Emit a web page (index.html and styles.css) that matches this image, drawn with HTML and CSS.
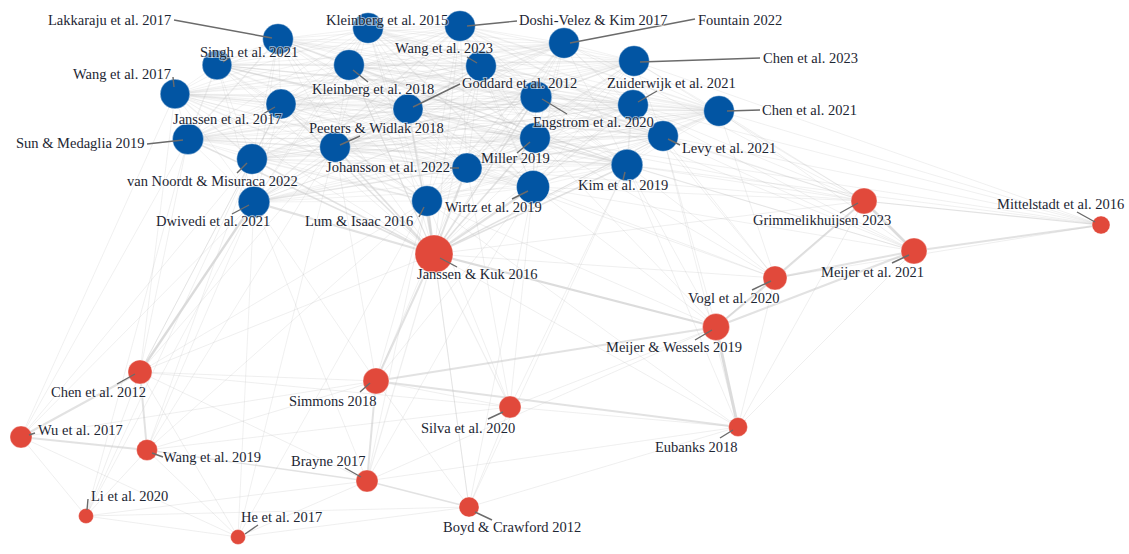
FILE: index.html
```html
<!DOCTYPE html>
<html lang="en">
<head>
<meta charset="utf-8">
<title>Citation network</title>
<link rel="stylesheet" href="styles.css">
</head>
<body>
<div class="canvas">
<svg class="graph" width="1129" height="554" viewBox="0 0 1129 554" xmlns="http://www.w3.org/2000/svg">
  <g id="edges"></g>
  <g class="nodes">
    <circle id="lak" class="node blue" cx="278" cy="39" r="15.3"/>
    <circle id="kl15" class="node blue" cx="368" cy="28" r="15.3"/>
    <circle id="doshi" class="node blue" cx="460" cy="26" r="15.3"/>
    <circle id="fount" class="node blue" cx="564" cy="43" r="15.3"/>
    <circle id="chen23" class="node blue" cx="634" cy="61" r="15.3"/>
    <circle id="singh" class="node blue" cx="217" cy="65" r="14.8"/>
    <circle id="kl18" class="node blue" cx="349" cy="65" r="15.3"/>
    <circle id="wang23" class="node blue" cx="481" cy="66" r="15.3"/>
    <circle id="wang17" class="node blue" cx="175" cy="94" r="14.8"/>
    <circle id="eng" class="node blue" cx="536" cy="97" r="15.8"/>
    <circle id="godd" class="node blue" cx="408" cy="109" r="15"/>
    <circle id="zuid" class="node blue" cx="633" cy="105" r="15.3"/>
    <circle id="chen21" class="node blue" cx="719" cy="111" r="15.3"/>
    <circle id="jan17" class="node blue" cx="281" cy="104" r="15"/>
    <circle id="peet" class="node blue" cx="335" cy="147" r="15.3"/>
    <circle id="sun" class="node blue" cx="188" cy="139" r="15.5"/>
    <circle id="mill" class="node blue" cx="535" cy="138" r="15.3"/>
    <circle id="levy" class="node blue" cx="663" cy="136" r="15.3"/>
    <circle id="vann" class="node blue" cx="252" cy="159" r="15.3"/>
    <circle id="joh" class="node blue" cx="467" cy="168" r="15"/>
    <circle id="kim" class="node blue" cx="627" cy="165" r="15.8"/>
    <circle id="wirtz" class="node blue" cx="533" cy="187" r="16.5"/>
    <circle id="dwiv" class="node blue" cx="254" cy="202" r="15.8"/>
    <circle id="lum" class="node blue" cx="427" cy="201" r="15.3"/>

    <circle id="jk" class="node red" cx="434" cy="254" r="19"/>
    <circle id="grim" class="node red" cx="864" cy="201" r="13"/>
    <circle id="mitt" class="node red" cx="1101" cy="225" r="9"/>
    <circle id="mei21" class="node red" cx="914" cy="251" r="13"/>
    <circle id="vogl" class="node red" cx="775" cy="278" r="12"/>
    <circle id="mw" class="node red" cx="716" cy="327" r="13.5"/>
    <circle id="chen12" class="node red" cx="140" cy="372" r="12"/>
    <circle id="simm" class="node red" cx="376" cy="381" r="13"/>
    <circle id="silva" class="node red" cx="510" cy="407" r="11"/>
    <circle id="eub" class="node red" cx="738" cy="427" r="9.5"/>
    <circle id="wu" class="node red" cx="21" cy="437" r="11"/>
    <circle id="wang19" class="node red" cx="147" cy="450" r="10.5"/>
    <circle id="brayne" class="node red" cx="367" cy="481" r="11"/>
    <circle id="boyd" class="node red" cx="469" cy="507" r="10"/>
    <circle id="li" class="node red" cx="86" cy="516" r="7.5"/>
    <circle id="he" class="node red" cx="238" cy="537" r="7.5"/>
  </g>
  <g class="leaders">
    <line x1="174" y1="20" x2="272" y2="38"/>
    <line x1="517" y1="21" x2="467" y2="26"/>
    <line x1="695" y1="19" x2="570" y2="43"/>
    <line x1="760" y1="58" x2="640" y2="62"/>
    <line x1="230" y1="57" x2="223" y2="62"/>
    <line x1="368" y1="82" x2="353" y2="70"/>
    <line x1="467" y1="57" x2="477" y2="63"/>
    <line x1="173" y1="77" x2="174" y2="87"/>
    <line x1="460" y1="84" x2="413" y2="107"/>
    <line x1="567" y1="114" x2="542" y2="99"/>
    <line x1="657" y1="91" x2="638" y2="102"/>
    <line x1="760" y1="110" x2="727" y2="111"/>
    <line x1="263" y1="114" x2="275" y2="107"/>
    <line x1="360" y1="136" x2="340" y2="145"/>
    <line x1="147" y1="144" x2="183" y2="140"/>
    <line x1="517" y1="153" x2="530" y2="142"/>
    <line x1="680" y1="145" x2="668" y2="139"/>
    <line x1="237" y1="173" x2="247" y2="163"/>
    <line x1="450" y1="168" x2="459" y2="168"/>
    <line x1="623" y1="180" x2="625" y2="172"/>
    <line x1="512" y1="199" x2="528" y2="191"/>
    <line x1="232" y1="214" x2="249" y2="205"/>
    <line x1="419" y1="217" x2="424" y2="207"/>

    <line x1="457" y1="267" x2="440" y2="258"/>
    <line x1="840" y1="213" x2="858" y2="203"/>
    <line x1="1077" y1="212" x2="1095" y2="222"/>
    <line x1="892" y1="263" x2="909" y2="255"/>
    <line x1="752" y1="290" x2="771" y2="281"/>
    <line x1="695" y1="340" x2="712" y2="330"/>
    <line x1="117" y1="384" x2="135" y2="374"/>
    <line x1="360" y1="392" x2="370" y2="383"/>
    <line x1="488" y1="419" x2="503" y2="412"/>
    <line x1="720" y1="438" x2="733" y2="430"/>
    <line x1="35" y1="433" x2="29" y2="435"/>
    <line x1="163" y1="457" x2="152" y2="453"/>
    <line x1="345" y1="468" x2="361" y2="477"/>
    <line x1="492" y1="520" x2="475" y2="512"/>
    <line x1="88" y1="499" x2="87" y2="510"/>
    <line x1="258" y1="525" x2="245" y2="534"/>
  </g>
  <g class="labels">
    <text x="48" y="25">Lakkaraju et al. 2017</text>
    <text x="326" y="25">Kleinberg et al. 2015</text>
    <text x="519" y="25">Doshi-Velez &amp; Kim 2017</text>
    <text x="698" y="25">Fountain 2022</text>
    <text x="763" y="63">Chen et al. 2023</text>
    <text x="200" y="57">Singh et al. 2021</text>
    <text x="395" y="53">Wang et al. 2023</text>
    <text x="73" y="79">Wang et al. 2017</text>
    <text x="312" y="94">Kleinberg et al. 2018</text>
    <text x="462" y="88">Goddard et al. 2012</text>
    <text x="607" y="88">Zuiderwijk et al. 2021</text>
    <text x="762" y="115">Chen et al. 2021</text>
    <text x="173" y="124">Janssen et al. 2017</text>
    <text x="309" y="133">Peeters &amp; Widlak 2018</text>
    <text x="533" y="127">Engstrom et al. 2020</text>
    <text x="16" y="148">Sun &amp; Medaglia 2019</text>
    <text x="682" y="153">Levy et al. 2021</text>
    <text x="481" y="163">Miller 2019</text>
    <text x="326" y="172">Johansson et al. 2022</text>
    <text x="127" y="186">van Noordt &amp; Misuraca 2022</text>
    <text x="578" y="190">Kim et al. 2019</text>
    <text x="445" y="212">Wirtz et al. 2019</text>
    <text x="156" y="226">Dwivedi et al. 2021</text>
    <text x="305" y="226">Lum &amp; Isaac 2016</text>

    <text x="753" y="225">Grimmelikhuijsen 2023</text>
    <text x="997" y="209">Mittelstadt et al. 2016</text>
    <text x="417" y="279">Janssen &amp; Kuk 2016</text>
    <text x="821" y="277">Meijer et al. 2021</text>
    <text x="688" y="303">Vogl et al. 2020</text>
    <text x="606" y="352">Meijer &amp; Wessels 2019</text>
    <text x="51" y="397">Chen et al. 2012</text>
    <text x="289" y="406">Simmons 2018</text>
    <text x="421" y="433">Silva et al. 2020</text>
    <text x="38" y="435">Wu et al. 2017</text>
    <text x="655" y="452">Eubanks 2018</text>
    <text x="163" y="462">Wang et al. 2019</text>
    <text x="291" y="466">Brayne 2017</text>
    <text x="91" y="501">Li et al. 2020</text>
    <text x="241" y="522">He et al. 2017</text>
    <text x="443" y="532">Boyd &amp; Crawford 2012</text>
  </g>
</svg>
</div>
<script src="script.js"></script>
</body>
</html>
```

FILE: styles.css
```css
html, body {
  margin: 0;
  padding: 0;
  background: #ffffff;
}

.canvas {
  width: 1129px;
  height: 554px;
  overflow: hidden;
}

.graph {
  display: block;
}

.edge {
  stroke: #b4b4b4;
  stroke-opacity: 0.22;
  stroke-linecap: round;
  fill: none;
}

.edge-mid {
  stroke: #cfcfcf;
  stroke-opacity: 0.6;
}

.edge-strong {
  stroke: #d6d6d6;
  stroke-opacity: 0.85;
}

.node {
  stroke: #ffffff;
  stroke-opacity: 0.35;
  stroke-width: 1;
}

.node.blue {
  fill: #0255a3;
}

.node.red {
  fill: #e1493b;
}

.leaders line {
  stroke: #6b6b6b;
  stroke-width: 1.4;
}

.labels text {
  font-family: "Liberation Serif", "Times New Roman", serif;
  font-size: 14.5px;
  fill: #1d2633;
  stroke: #ffffff;
  stroke-opacity: 0.55;
  stroke-width: 2px;
  paint-order: stroke fill;
}
```

FILE: script.js
```js
(function () {
  var svgNS = "http://www.w3.org/2000/svg";
  var group = document.getElementById("edges");

  function pos(id) {
    var c = document.getElementById(id);
    return [parseFloat(c.getAttribute("cx")), parseFloat(c.getAttribute("cy"))];
  }

  function addEdge(a, b, width, kind) {
    var p = pos(a), q = pos(b);
    var l = document.createElementNS(svgNS, "line");
    l.setAttribute("x1", p[0]);
    l.setAttribute("y1", p[1]);
    l.setAttribute("x2", q[0]);
    l.setAttribute("y2", q[1]);
    l.setAttribute("stroke-width", width);
    l.setAttribute("class", "edge" + (kind ? " " + kind : ""));
    group.appendChild(l);
  }

  var blue = ["lak", "kl15", "doshi", "fount", "chen23", "singh", "kl18", "wang23",
    "wang17", "eng", "godd", "zuid", "chen21", "jan17", "peet", "sun", "mill",
    "levy", "vann", "joh", "kim", "wirtz", "dwiv", "lum"];

  /* dense cluster: every pair of blue nodes */
  for (var i = 0; i < blue.length; i++) {
    for (var j = i + 1; j < blue.length; j++) {
      addEdge(blue[i], blue[j], ((i * 7 + j * 3) % 5 === 0) ? 1.4 : 0.8, "");
    }
  }

  /* Janssen & Kuk fan into the cluster */
  var jkW = { dwiv: 2.2, lum: 2.4, wirtz: 2.2, joh: 2, kim: 1.6, vann: 1.6, peet: 1.8,
    mill: 1.6, godd: 1.6, sun: 1.4, jan17: 1.4, kl18: 1.2, eng: 1.4, levy: 1.2 };
  blue.forEach(function (b) {
    addEdge("jk", b, jkW[b] || 0.9, jkW[b] ? "edge-mid" : "");
  });

  var faint = {
    grim: ["chen21", "levy", "kim", "zuid", "chen23", "mill", "eng", "wirtz", "joh", "fount"],
    mei21: ["chen21", "levy", "kim", "zuid", "wirtz", "mill", "eng"],
    mitt: ["chen21", "levy", "zuid", "kim", "mill", "chen23"],
    vogl: ["kim", "levy", "wirtz", "mill", "joh", "zuid", "chen21"],
    mw: ["kim", "wirtz", "levy", "lum", "mill"],
    chen12: ["dwiv", "vann", "sun", "jan17", "lum", "wang17", "peet"],
    wu: ["sun", "dwiv", "vann", "wang17"],
    wang19: ["dwiv", "lum", "peet", "vann"],
    li: ["dwiv", "vann", "sun"],
    he: ["dwiv", "lum", "peet"],
    simm: ["lum", "wirtz", "joh", "dwiv", "peet"],
    silva: ["wirtz", "kim", "lum", "joh"],
    brayne: ["lum", "wirtz", "dwiv"],
    boyd: ["lum", "kim", "wirtz"],
    eub: ["kim", "lum", "levy"]
  };
  Object.keys(faint).forEach(function (r) {
    faint[r].forEach(function (b) { addEdge(r, b, 0.9, ""); });
  });

  var redEdges = [
    ["chen12", "dwiv", 2.4, "edge-strong"],
    ["jk", "mw", 2.2, "edge-strong"],
    ["jk", "simm", 2, "edge-mid"],
    ["simm", "mw", 2, "edge-mid"],
    ["simm", "eub", 2, "edge-mid"],
    ["mw", "eub", 3, "edge-strong"],
    ["mw", "vogl", 2, "edge-mid"],
    ["mw", "mei21", 2.2, "edge-mid"],
    ["mw", "grim", 1.2, ""],
    ["vogl", "grim", 2, "edge-mid"],
    ["vogl", "mei21", 2, "edge-mid"],
    ["grim", "mei21", 2.6, "edge-strong"],
    ["mei21", "mitt", 2, "edge-mid"],
    ["grim", "mitt", 1.2, "edge-mid"],
    ["vogl", "mitt", 1, ""],
    ["chen12", "wu", 2, "edge-mid"],
    ["chen12", "wang19", 2, "edge-mid"],
    ["wu", "wang19", 2.2, "edge-mid"],
    ["wu", "li", 1, ""],
    ["wu", "he", 1, ""],
    ["wang19", "brayne", 1.4, "edge-mid"],
    ["wang19", "he", 1, ""],
    ["wang19", "li", 1, ""],
    ["chen12", "simm", 1, ""],
    ["chen12", "silva", 1, ""],
    ["chen12", "brayne", 1, ""],
    ["chen12", "he", 1, ""],
    ["chen12", "li", 1, ""],
    ["li", "brayne", 1, ""],
    ["li", "he", 1, ""],
    ["li", "boyd", 1, ""],
    ["he", "brayne", 1, ""],
    ["he", "boyd", 1, ""],
    ["simm", "brayne", 2, "edge-mid"],
    ["simm", "silva", 1.2, ""],
    ["simm", "boyd", 1, ""],
    ["brayne", "boyd", 1.4, "edge-mid"],
    ["boyd", "silva", 1, ""],
    ["boyd", "eub", 1, ""],
    ["jk", "silva", 1.2, ""],
    ["jk", "brayne", 1.2, ""],
    ["jk", "boyd", 1, ""],
    ["jk", "eub", 1, ""],
    ["jk", "chen12", 1, ""],
    ["jk", "vogl", 1, ""],
    ["jk", "grim", 1, ""],
    ["silva", "mw", 1, ""],
    ["brayne", "mw", 1, ""],
    ["eub", "vogl", 1, ""],
    ["eub", "grim", 1, ""],
    ["eub", "mei21", 1, ""],
    ["silva", "eub", 1, ""],
    ["wu", "simm", 1, ""],
    ["wang19", "simm", 1, ""],
    ["wang19", "silva", 1, ""],
    ["brayne", "eub", 1, ""]
  ];
  redEdges.forEach(function (e) { addEdge(e[0], e[1], e[2], e[3]); });
})();
```
